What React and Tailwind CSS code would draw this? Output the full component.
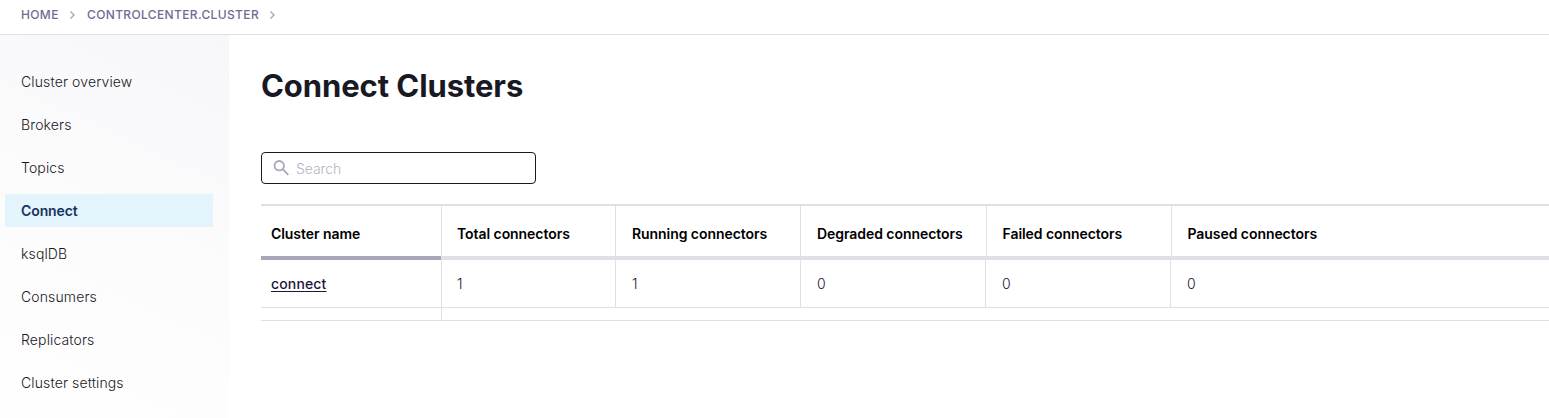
import React from "react";

const NAV = [
  "Cluster overview",
  "Brokers",
  "Topics",
  "Connect",
  "ksqlDB",
  "Consumers",
  "Replicators",
  "Cluster settings",
];

const COLUMNS = [
  { title: "Total connectors", value: "1", head: "w-[174px] pl-[15px]", cell: "w-[174px] pl-[15px]" },
  { title: "Running connectors", value: "1", head: "w-[185px] pl-4", cell: "w-[185px] pl-4" },
  { title: "Degraded connectors", value: "0", head: "w-[186px] pl-4", cell: "w-[185px] pl-4" },
  { title: "Failed connectors", value: "0", head: "w-[185px] pl-[15.5px]", cell: "w-[185px] pl-4" },
  { title: "Paused connectors", value: "0", head: "flex-1 pl-[15.5px]", cell: "flex-1 pl-4" },
];

function Chevron() {
  return (
    <svg className="h-2 w-[5px]" viewBox="0 0 5 8" fill="none" stroke="#a5a2b5" strokeWidth="1.3">
      <path d="M0.5 0.5 4 4 0.5 7.5" />
    </svg>
  );
}

function Breadcrumbs() {
  return (
    <header className="flex h-[35px] items-start border-b border-[#dfdfe8] pl-[21px] pt-[5px] text-xs font-medium leading-5 tracking-[0.36px] text-[#716b92]">
      <div className="flex h-5 items-center">
        <span className="w-[49px]">HOME</span>
        <Chevron />
        <span className="ml-3 w-[183px]">CONTROLCENTER.CLUSTER</span>
        <Chevron />
      </div>
    </header>
  );
}

function Sidebar() {
  return (
    <nav className="flex w-[229px] flex-col gap-2.5 bg-[linear-gradient(205deg,#f7f7fa,#fbfbfc_45%,#fefefe_90%)] pl-[5px] pr-4 pt-[30px]">
      {NAV.map((item) => (
        <a
          key={item}
          className={
            item === "Connect"
              ? "h-[33px] bg-[#e3f4fc] pl-4 text-sm font-semibold leading-[33px] tracking-[-0.1px] text-[#173361]"
              : "h-[33px] pl-4 text-sm font-light leading-[33px] tracking-[0.13px] text-[#191924]"
          }
        >
          {item}
        </a>
      ))}
    </nav>
  );
}

function SearchBox() {
  return (
    <div className="mt-[46px] flex h-8 w-[275px] items-center rounded border border-[#191924] pl-[11px]">
      <svg className="size-4" viewBox="0 0 16 16" fill="none" stroke="#aaa7bb" strokeWidth="1.8">
        <circle cx="6.2" cy="5.7" r="4.7" />
        <path d="M9.7 9.2 15.3 14.8" />
      </svg>
      <span className="ml-[7px] pt-px text-sm font-light tracking-[-0.1px] text-[#b5b3c3]">Search</span>
    </div>
  );
}

function ClusterTable() {
  return (
    <section className="mt-5 border-b border-[#dfdfe6] text-sm">
      <div className="flex h-14 border-t-2 border-[#dfdfe6] font-semibold leading-[56px] tracking-[-0.06px] text-black">
        <div className="w-[180px] border-b-4 border-[#a9a6b9] pl-2.5">Cluster name</div>
        {COLUMNS.map((c) => (
          <div key={c.title} className={`border-b-4 border-l border-[#dfdfe6] ${c.head}`}>
            {c.title}
          </div>
        ))}
      </div>
      <div className="flex h-12 border-b border-[#dfdfe6] leading-[48px]">
        <div className="w-[180px] pl-2.5 font-medium tracking-[0.15px] text-[#1b1537]">
          <a className="underline underline-offset-2">connect</a>
        </div>
        {COLUMNS.map((c) => (
          <div key={c.title} className={`border-l border-[#dfdfe6] font-light text-[#1b1537] ${c.cell}`}>
            {c.value}
          </div>
        ))}
      </div>
      <div className="flex h-3">
        <div className="w-[180px]" />
        <div className="flex-1 border-l border-[#dfdfe6]" />
      </div>
    </section>
  );
}

export default function App() {
  return (
    <div className="flex h-[418px] flex-col overflow-hidden bg-white font-['Inter',sans-serif]">
      <Breadcrumbs />
      <div className="flex flex-1">
        <Sidebar />
        <main className="flex-1 pl-8 pt-[31px]">
          <h1 className="h-10 text-[31px] font-bold leading-10 tracking-[-0.08px] text-[#191924]">
            Connect Clusters
          </h1>
          <SearchBox />
          <ClusterTable />
        </main>
      </div>
    </div>
  );
}
